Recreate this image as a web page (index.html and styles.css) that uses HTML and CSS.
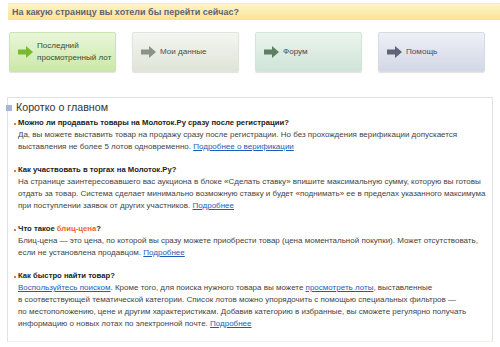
FILE: index.html
```html
<!DOCTYPE html>
<html lang="ru">
<head>
    <meta charset="UTF-8">
    <title>Помощь</title>
    <link rel="stylesheet" href="styles.css">
</head>
<body>
    <!-- Question bar -->
    <div class="goto-bar">На какую страницу вы хотели бы перейти сейчас?</div>

    <!-- Navigation buttons -->
    <div class="goto-buttons">
        <a class="goto-btn btn-last" href="#">
            <svg class="arrow" viewBox="0 0 15 12"><path d="M0 3.5h8V0l7 6-7 6V8.5H0z"/></svg>
            <span>Последний<br>просмотренный лот</span>
        </a>
        <a class="goto-btn btn-data" href="#">
            <svg class="arrow" viewBox="0 0 15 12"><path d="M0 3.5h8V0l7 6-7 6V8.5H0z"/></svg>
            <span>Мои данные</span>
        </a>
        <a class="goto-btn btn-forum" href="#">
            <svg class="arrow" viewBox="0 0 15 12"><path d="M0 3.5h8V0l7 6-7 6V8.5H0z"/></svg>
            <span>Форум</span>
        </a>
        <a class="goto-btn btn-help" href="#">
            <svg class="arrow" viewBox="0 0 15 12"><path d="M0 3.5h8V0l7 6-7 6V8.5H0z"/></svg>
            <span>Помощь</span>
        </a>
    </div>

    <!-- FAQ -->
    <div class="faq">
        <h2 class="faq-title">Коротко о главном</h2>

        <div class="faq-item">
            <p class="q">Можно ли продавать товары на Молоток.Ру сразу после регистрации?</p>
            <p class="a">Да, вы можете выставить товар на продажу сразу после регистрации. Но без прохождения верификации допускается<br>
                выставления не более 5 лотов одновременно. <a href="#">Подробнее о верификации</a></p>
        </div>

        <div class="faq-item">
            <p class="q">Как участвовать в торгах на Молоток.Ру?</p>
            <p class="a">На странице заинтересовавшего вас аукциона в блоке «Сделать ставку» впишите максимальную сумму, которую вы готовы<br>
                отдать за товар. Система сделает минимально возможную ставку и будет «поднимать» ее в пределах указанного максимума<br>
                при поступлении заявок от других участников. <a href="#">Подробнее</a></p>
        </div>

        <div class="faq-item">
            <p class="q">Что такое <span class="hl">блиц-цена</span>?</p>
            <p class="a">Блиц-цена — это цена, по которой вы сразу можете приобрести товар (цена моментальной покупки). Может отсутствовать,<br>
                если не установлена продавцом. <a href="#">Подробнее</a></p>
        </div>

        <div class="faq-item">
            <p class="q">Как быстро найти товар?</p>
            <p class="a"><a href="#">Воспользуйтесь поиском</a>. Кроме того, для поиска нужного товара вы можете <a href="#">просмотреть лоты</a>, выставленные<br>
                в соответствующей тематической категории. Список лотов можно упорядочить с помощью специальных фильтров —<br>
                по местоположению, цене и другим характеристикам. Добавив категорию в избранные, вы сможете регулярно получать<br>
                информацию о новых лотах по электронной почте. <a href="#">Подробнее</a></p>
        </div>
    </div>
</body>
</html>
```

FILE: styles.css
```css
* {
    margin: 0;
    padding: 0;
    box-sizing: border-box;
}

body {
    font-family: "Liberation Sans", Arial, sans-serif;
    background-color: #fff;
    color: #333;
    padding: 3px 0 0 7px;
    width: 500px;
    overflow: hidden;
}

/* Question bar */
.goto-bar {
    height: 17px;
    margin-left: 1px;
    padding: 3px 0 0 4px;
    background: linear-gradient(#fdf4cc, #fbe391);
    border-top: 1px solid #fbeaa9;
    font-size: 9px;
    font-weight: bold;
    color: #5f6470;
    white-space: nowrap;
}

/* Buttons */
.goto-buttons {
    display: flex;
    gap: 16px;
    margin: 12px 0 0 2px;
}

.goto-btn {
    display: flex;
    align-items: center;
    width: 107px;
    height: 40px;
    padding-left: 8px;
    border-radius: 2px;
    text-decoration: none;
    font-size: 8.1px;
    line-height: 12px;
    white-space: nowrap;
    color: #3c4a28;
    box-shadow: 0 1px 1px rgba(0, 0, 0, 0.12);
}

.goto-btn .arrow {
    width: 15px;
    height: 12px;
    margin-right: 4px;
    flex-shrink: 0;
}

.btn-last {
    background: linear-gradient(#e9f6da, #cbe8a7);
    border: 1px solid #cbe3ad;
}
.btn-last .arrow { fill: #79bb2f; }

.btn-data {
    background: linear-gradient(#f4f5f1, #dfe4d7);
    border: 1px solid #e0e4da;
    color: #4a4f44;
}
.btn-data .arrow { fill: #8b9484; }

.btn-forum {
    background: linear-gradient(#ebf4ee, #cfe4d8);
    border: 1px solid #d3e5da;
    color: #3f4a44;
}
.btn-forum .arrow { fill: #5f7f64; }

.btn-help {
    background: linear-gradient(#eef0f6, #d3d7e6);
    border: 1px solid #d8dbe6;
    color: #474b58;
}
.btn-help .arrow { fill: #5f6476; }

/* FAQ block */
.faq {
    width: 486px;
    height: 245px;
    margin-top: 25px;
    border: 1px solid #e2e2e2;
    border-bottom-color: #f6f3d8;
    padding: 3px 0 0 10px;
    position: relative;
}

.faq-title {
    font-size: 10.7px;
    font-weight: normal;
    color: #333;
    margin-left: -2px;
    margin-bottom: 4px;
    position: relative;
}

.faq-title::before {
    content: "";
    position: absolute;
    left: -10px;
    top: 4px;
    width: 6px;
    height: 6px;
    background: #a8b6d6;
}

.faq-item {
    margin-bottom: 11px;
    font-size: 8px;
    line-height: 12px;
    color: #444;
}

.faq-item .q {
    font-size: 7.7px;
    font-weight: bold;
    color: #222;
    position: relative;
}

.faq-item .q::before {
    content: "";
    position: absolute;
    left: -4px;
    top: 6px;
    width: 2px;
    height: 2px;
    background: #f07a2a;
}

.faq-item .a {
    white-space: nowrap;
}

.faq-item .hl {
    color: #f0641e;
}

.faq-item a {
    color: #1b5eb5;
}
```
